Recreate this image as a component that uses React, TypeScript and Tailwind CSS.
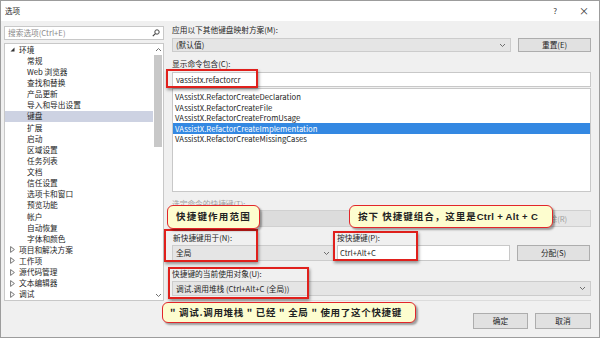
import React from 'react';

type TreeItem = { label: string; level: 0 | 1; open?: boolean; selected?: boolean };

const tree: TreeItem[] = [
  { label: '环境', level: 0, open: true },
  { label: '常规', level: 1 },
  { label: 'Web 浏览器', level: 1 },
  { label: '查找和替换', level: 1 },
  { label: '产品更新', level: 1 },
  { label: '导入和导出设置', level: 1 },
  { label: '键盘', level: 1, selected: true },
  { label: '扩展', level: 1 },
  { label: '启动', level: 1 },
  { label: '区域设置', level: 1 },
  { label: '任务列表', level: 1 },
  { label: '文档', level: 1 },
  { label: '信任设置', level: 1 },
  { label: '选项卡和窗口', level: 1 },
  { label: '预览功能', level: 1 },
  { label: '帐户', level: 1 },
  { label: '自动恢复', level: 1 },
  { label: '字体和颜色', level: 1 },
  { label: '项目和解决方案', level: 0 },
  { label: '工作项', level: 0 },
  { label: '源代码管理', level: 0 },
  { label: '文本编辑器', level: 0 },
  { label: '调试', level: 0 },
];

const commands = [
  'VAssistX.RefactorCreateDeclaration',
  'VAssistX.RefactorCreateFile',
  'VAssistX.RefactorCreateFromUsage',
  'VAssistX.RefactorCreateImplementation',
  'VAssistX.RefactorCreateMissingCases',
];

const Chevron = ({ up = false }: { up?: boolean }) => (
  <svg width="7" height="5" viewBox="0 0 7 5" className="shrink-0">
    <polyline
      points={up ? '1,4 3.5,1.5 6,4' : '1,1 3.5,3.5 6,1'}
      fill="none"
      stroke="#606060"
      strokeWidth="0.9"
    />
  </svg>
);

const Combo = ({ text, className = '' }: { text: string; className?: string }) => (
  <div className={`flex items-center justify-between bg-[#e5e5e5] border border-[#cccccc] pl-[3px] pr-[4px] ${className}`}>
    <span className="whitespace-nowrap">{text}</span>
    <Chevron />
  </div>
);

const Button = ({ text, className = '' }: { text: string; className?: string }) => (
  <div className={`flex items-center justify-center bg-[#e1e1e1] border border-[#adadad] ${className}`}>
    {text}
  </div>
);

const Callout = ({ text, className = '' }: { text: React.ReactNode; className?: string }) => (
  <div
    className={`absolute flex items-center bg-[#fdfdcf] border-[1.5px] border-[#e2262a] rounded-[6px] shadow-[2px_2px_2px_rgba(0,0,0,0.35)] font-bold text-[9.5px] text-[#222] whitespace-nowrap ${className}`}
  >
    {text}
  </div>
);

const RedBox = ({ className = '' }: { className?: string }) => (
  <div className={`absolute border-2 border-[#e0201c] shadow-[1px_2px_3px_rgba(0,0,0,0.4)] ${className}`} />
);

export default function App() {
  return (
    <div className="relative w-[600px] h-[338px] bg-[#f0f0f0] border border-[#9c9c9c] flex flex-col overflow-hidden text-[7.7px] leading-none text-[#1e1e1e] font-['Noto_Sans_CJK_SC',sans-serif]">
      {/* title bar */}
      <div className="h-[20px] bg-white flex items-center pl-[4px] pr-[10px] shrink-0">
        <span className="text-[7.5px]">选项</span>
        <span className="ml-auto text-[8px] text-[#333]">?</span>
        <span className="ml-[22px] text-[10px] text-[#333]">×</span>
      </div>

      <div className="flex flex-1">
        {/* left column */}
        <div className="w-[163px] pl-[3px] pt-[5px] flex flex-col gap-[3px] shrink-0">
          <div className="h-[14px] bg-white border border-[#c8c8c8] flex items-center pl-[3px] pr-[3px]">
            <span className="text-[#8a8a8a]">搜索选项(Ctrl+E)</span>
            <svg width="8" height="8" viewBox="0 0 8 8" className="ml-auto">
              <circle cx="5" cy="3" r="2.2" fill="none" stroke="#444" strokeWidth="1" />
              <line x1="3.4" y1="4.6" x2="0.8" y2="7.2" stroke="#444" strokeWidth="1.2" />
            </svg>
          </div>
          <div className="h-[258px] bg-white border border-[#c8c8c8] flex">
            <div className="flex-1 flex flex-col">
              {tree.map((t) => (
                <div
                  key={t.label}
                  className={`h-[11.25px] flex items-center ${t.selected ? 'bg-[#cdd2e2]' : ''} ${t.level === 1 ? 'pl-[22px]' : 'pl-[5px]'}`}
                >
                  {t.level === 0 && (
                    <span className="w-[9px] flex items-center">
                      {t.open ? (
                        <svg width="5" height="5" viewBox="0 0 5 5">
                          <polygon points="4.5,0.5 4.5,4.5 0.5,4.5" fill="#333" />
                        </svg>
                      ) : (
                        <svg width="5" height="7" viewBox="0 0 5 7">
                          <polygon points="0.6,0.6 4.4,3.5 0.6,6.4" fill="none" stroke="#555" strokeWidth="0.8" />
                        </svg>
                      )}
                    </span>
                  )}
                  <span>{t.label}</span>
                </div>
              ))}
            </div>
            <div className="w-[10px] flex flex-col items-center">
              <div className="h-[11px] flex items-center">
                <Chevron up />
              </div>
              <div className="w-[8px] h-[92px] bg-[#c8c8c8]" />
              <div className="mt-auto h-[10px] flex items-center">
                <Chevron />
              </div>
            </div>
          </div>
        </div>

        {/* right column */}
        <div className="ml-[8px] w-[419px] flex flex-col">
          <div className="mt-[4px] h-[10px] flex items-center">应用以下其他键盘映射方案(M):</div>
          <div className="mt-[3px] h-[14px] flex gap-[7px]">
            <Combo text="(默认值)" className="w-[339px]" />
            <Button text="重置(E)" className="w-[73px]" />
          </div>
          <div className="mt-[7px] h-[10px] flex items-center">显示命令包含(C):</div>
          <div className="mt-[3px] h-[15px] bg-white border border-[#c8c8c8] flex items-center pl-[3px]">
            vassistx.refactorcr
          </div>
          <div className="mt-[1px] h-[104px] bg-white border border-[#c8c8c8] pt-[3px]">
            {commands.map((c, i) => (
              <div
                key={c}
                className={`h-[10.4px] flex items-center pl-[2px] ${i === 3 ? 'bg-[#3388e2] text-white' : ''}`}
              >
                {c}
              </div>
            ))}
          </div>
          <div className="mt-[7px] h-[10px] flex items-center text-[#a0a0a0]">选定命令的快捷键(T):</div>
          <div className="mt-[1px] h-[17px] flex gap-[7px]">
            <div className="w-[339px] bg-[#dcdcdc] border border-[#d0d0d0]" />
            <div className="w-[73px] bg-[#e6e6e6] border border-[#d0d0d0] flex items-center justify-center text-[#a0a0a0]">
              删除(R)
            </div>
          </div>
          <div className="mt-[6px] h-[10px] flex items-center">
            <span className="w-[165px] pl-[1px]">新快捷键用于(N):</span>
            <span>按快捷键(P):</span>
          </div>
          <div className="mt-[2px] h-[16px] flex">
            <Combo text="全局" className="w-[163px]" />
            <div className="ml-[2px] w-[173px] bg-white border border-[#c8c8c8] flex items-center pl-[2px]">
              Ctrl+Alt+C
            </div>
            <Button text="分配(S)" className="ml-[7px] w-[73px]" />
          </div>
          <div className="mt-[8px] h-[10px] flex items-center">快捷键的当前使用对象(U):</div>
          <Combo text="调试.调用堆栈 (Ctrl+Alt+C (全局))" className="mt-[2px] h-[15px]" />
          <div className="mt-[4px] h-px bg-[#dcdcdc]" />
          <div className="mt-[12px] h-[16px] flex justify-end gap-[7px]">
            <Button text="确定" className="w-[55px] border-[#0078d7]" />
            <Button text="取消" className="w-[56px]" />
          </div>
        </div>
      </div>

      {/* annotations */}
      <RedBox className="left-[165px] top-[68px] w-[92px] h-[19px]" />
      <RedBox className="left-[163px] top-[228px] w-[94px] h-[33px]" />
      <RedBox className="left-[332px] top-[230px] w-[85px] h-[30px]" />
      <RedBox className="left-[167px] top-[266px] w-[141px] h-[32px]" />

      <Callout text="快捷键作用范围" className="left-[166px] top-[204px] w-[93px] h-[24px] pl-[8px] tracking-[1.2px]" />
      <Callout
        text={
          <>
            按下 快捷键组合，这里是 <span className="font-['Liberation_Sans',sans-serif] tracking-[0.3px]">Ctrl + Alt + C</span>
          </>
        }
        className="left-[348px] top-[204px] w-[204px] h-[23px] pl-[8px] tracking-[1px]"
      />
      <Callout
        text={'" 调试.调用堆栈 " 已经 " 全局 " 使用了这个快捷键'}
        className="left-[161px] top-[301px] w-[254px] h-[21px] pl-[7px] tracking-[0.7px]"
      />
    </div>
  );
}
